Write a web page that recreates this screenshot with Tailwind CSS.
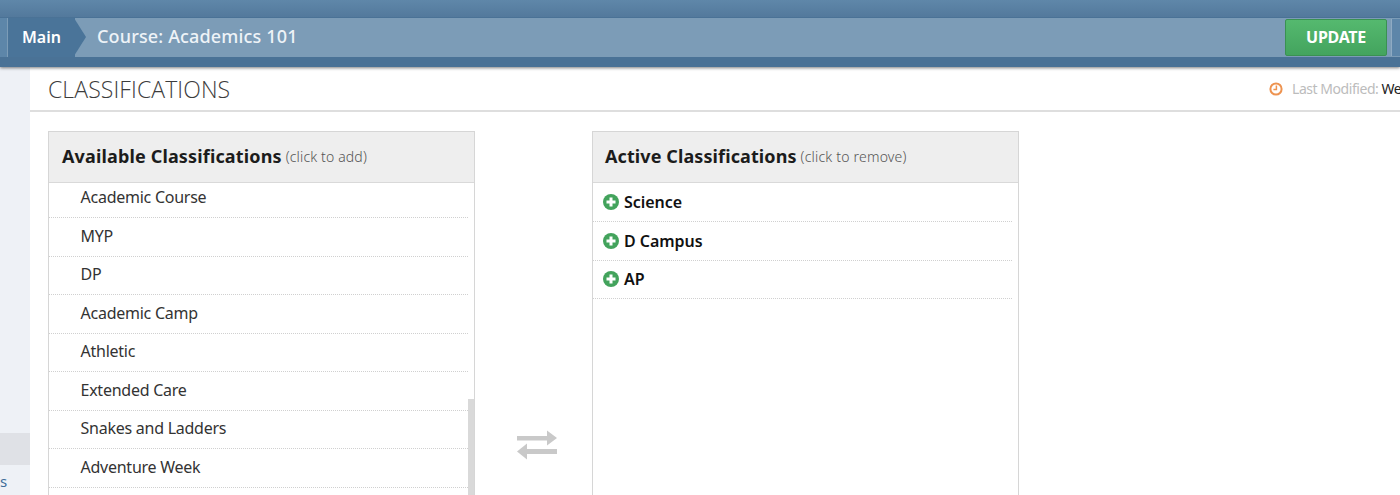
<!DOCTYPE html>
<html>
<head>
<meta charset="utf-8">
<script src="https://cdn.jsdelivr.net/npm/@tailwindcss/browser@4"></script>
</head>
<body class="h-[495px] w-[1400px] overflow-hidden bg-white font-['Noto_Sans',sans-serif]">
  <header class="h-[67px] flex flex-col shadow-[0_1px_3px_rgba(0,0,0,0.5)] relative z-10">
    <div class="h-[17px] bg-gradient-to-b from-[#5f87a9] to-[#53799c]"></div>
    <div class="h-[40px] flex items-stretch bg-[#7c9cb7] border-t border-[#4a7296]">
      <div class="w-[8px] bg-[#5d86a9] border-r border-[#7c9cb7]"></div>
      <div class="relative w-[67px] bg-[#4a7499] flex items-center pl-[14px] pb-[2px] text-[16px] font-semibold text-white">
        Main
        <svg class="absolute left-[66px] top-0 h-[38px] w-[12px]" viewBox="0 0 12 38"><path d="M0 0 L12 19 L0 38 Z" fill="#4a7499"/></svg>
      </div>
      <div class="ml-[22px] pb-[2px] flex items-center text-[18px] font-medium text-[#eef3f7] tracking-[0.15px]">Course: Academics 101</div>
      <div class="ml-auto flex items-center">
        <button class="h-[37px] w-[102px] rounded-[2px] border border-[#3a9152] bg-gradient-to-b from-[#55b96f] to-[#43a45e] pb-[2px] text-[16px] font-bold tracking-[-0.3px] text-white">UPDATE</button>
        <div class="ml-[4px] h-[37px] w-[9px] bg-[#5d86a9] border-l border-[#8fabc3]"></div>
      </div>
    </div>
    <div class="h-[10px] bg-[#4a7296]"></div>
  </header>

  <div class="flex h-[428px]">
    <aside class="w-[30px] shrink-0 bg-[#eef1f6] flex flex-col">
      <div class="h-[366px]"></div>
      <div class="h-[32px] bg-[#dfe1e6]"></div>
      <div class="pt-[6px] pl-0 text-[15px] leading-[20px] text-[#3f6d99]">s</div>
    </aside>

    <main class="flex-1 min-w-0 overflow-hidden">
      <div class="h-[45px] border-b-2 border-[#dedede] pl-[18px] flex items-center justify-between">
        <h1 class="pt-[2px] text-[23px] font-light text-[#3c3c3c] tracking-[0.1px] font-['Open_Sans',sans-serif]">CLASSIFICATIONS</h1>
        <div class="flex items-center text-[14px] whitespace-nowrap w-[131px] shrink-0 overflow-hidden">
          <svg class="w-[14px] h-[14px] shrink-0" viewBox="0 0 14 14" fill="none" stroke="#ee9350" stroke-width="2"><circle cx="7" cy="7" r="5.6"/><path d="M7.4 3.6V7.6H4.4" stroke-width="1.5"/></svg>
          <span class="ml-[9px] text-[#bcbcbc] tracking-[-0.45px]">Last Modified:</span><span class="ml-[3px] text-[#222] tracking-[-0.45px]">We</span>
        </div>
      </div>

      <div class="flex pt-[19px] pl-[18px]">
        <section class="w-[427px] h-[400px] shrink-0 border border-[#d6d6d6] relative overflow-hidden">
          <div class="h-[51px] bg-[#eeeeee] border-b border-[#d9d9d9] flex items-center pl-[13px] pb-[2px] whitespace-nowrap">
            <span class="text-[18px] font-bold text-[#1c1c1c] tracking-[0.15px]">Available Classifications</span>
            <span class="ml-[4px] text-[14px] font-light text-[#555] tracking-[0.15px]">(click to add)</span>
          </div>
          <ul class="mt-[-3.5px] w-[419px] text-[16px] text-[#333] tracking-[-0.25px]">
            <li class="h-[38.5px] flex items-center pl-[31.5px] pb-[2.5px] border-b border-dotted border-[#d0d0d0]">Academic Course</li>
            <li class="h-[38.5px] flex items-center pl-[31.5px] pb-[2.5px] border-b border-dotted border-[#d0d0d0]">MYP</li>
            <li class="h-[38.5px] flex items-center pl-[31.5px] pb-[2.5px] border-b border-dotted border-[#d0d0d0]">DP</li>
            <li class="h-[38.5px] flex items-center pl-[31.5px] pb-[2.5px] border-b border-dotted border-[#d0d0d0]">Academic Camp</li>
            <li class="h-[38.5px] flex items-center pl-[31.5px] pb-[2.5px] border-b border-dotted border-[#d0d0d0]">Athletic</li>
            <li class="h-[38.5px] flex items-center pl-[31.5px] pb-[2.5px] border-b border-dotted border-[#d0d0d0]">Extended Care</li>
            <li class="h-[38.5px] flex items-center pl-[31.5px] pb-[2.5px] border-b border-dotted border-[#d0d0d0]">Snakes and Ladders</li>
            <li class="h-[38.5px] flex items-center pl-[31.5px] pb-[2.5px] border-b border-dotted border-[#d0d0d0]">Adventure Week</li>
            <li class="h-[38.5px]"></li>
          </ul>
          <div class="absolute right-0 top-[267px] w-[6px] h-[130px] bg-[#d9d9d9]"></div>
        </section>

        <div class="w-[117px] shrink-0 flex justify-center pt-[299px] pl-[6px]">
          <svg class="w-[42px] h-[30px]" viewBox="0 0 42 30" fill="#c9c9c9"><path d="M1 6H31V0.5L41 8L31 15.5V10.5H1Z"/><path d="M41 19H11V13.5L1 21.5L11 29.5V24H41Z"/></svg>
        </div>

        <section class="w-[427px] h-[400px] shrink-0 border border-[#d6d6d6] overflow-hidden">
          <div class="h-[51px] bg-[#eeeeee] border-b border-[#d9d9d9] flex items-center pl-[12px] pb-[2px] whitespace-nowrap">
            <span class="text-[18px] font-bold text-[#1c1c1c] tracking-[0.1px]">Active Classifications</span>
            <span class="ml-[4px] text-[14px] font-light text-[#555] tracking-[0.2px]">(click to remove)</span>
          </div>
          <ul class="mt-[0.5px] w-[419px] text-[16px] font-semibold text-[#111] tracking-[-0.05px]">
            <li class="h-[38.5px] flex items-center pl-[10px] gap-[5px] pb-[0.5px] border-b border-dotted border-[#d0d0d0]">
              <svg class="w-[16px] h-[16px]" viewBox="0 0 16 16"><circle cx="8" cy="8" r="8" fill="#43a35c"/><path d="M8 3.5V12.5M3.5 8H12.5" stroke="#fff" stroke-width="3"/></svg>Science</li>
            <li class="h-[38.5px] flex items-center pl-[10px] gap-[5px] pb-[0.5px] border-b border-dotted border-[#d0d0d0]">
              <svg class="w-[16px] h-[16px]" viewBox="0 0 16 16"><circle cx="8" cy="8" r="8" fill="#43a35c"/><path d="M8 3.5V12.5M3.5 8H12.5" stroke="#fff" stroke-width="3"/></svg>D Campus</li>
            <li class="h-[38.5px] flex items-center pl-[10px] gap-[5px] pb-[0.5px] border-b border-dotted border-[#d0d0d0]">
              <svg class="w-[16px] h-[16px]" viewBox="0 0 16 16"><circle cx="8" cy="8" r="8" fill="#43a35c"/><path d="M8 3.5V12.5M3.5 8H12.5" stroke="#fff" stroke-width="3"/></svg>AP</li>
          </ul>
        </section>
      </div>
    </main>
  </div>
</body>
</html>
